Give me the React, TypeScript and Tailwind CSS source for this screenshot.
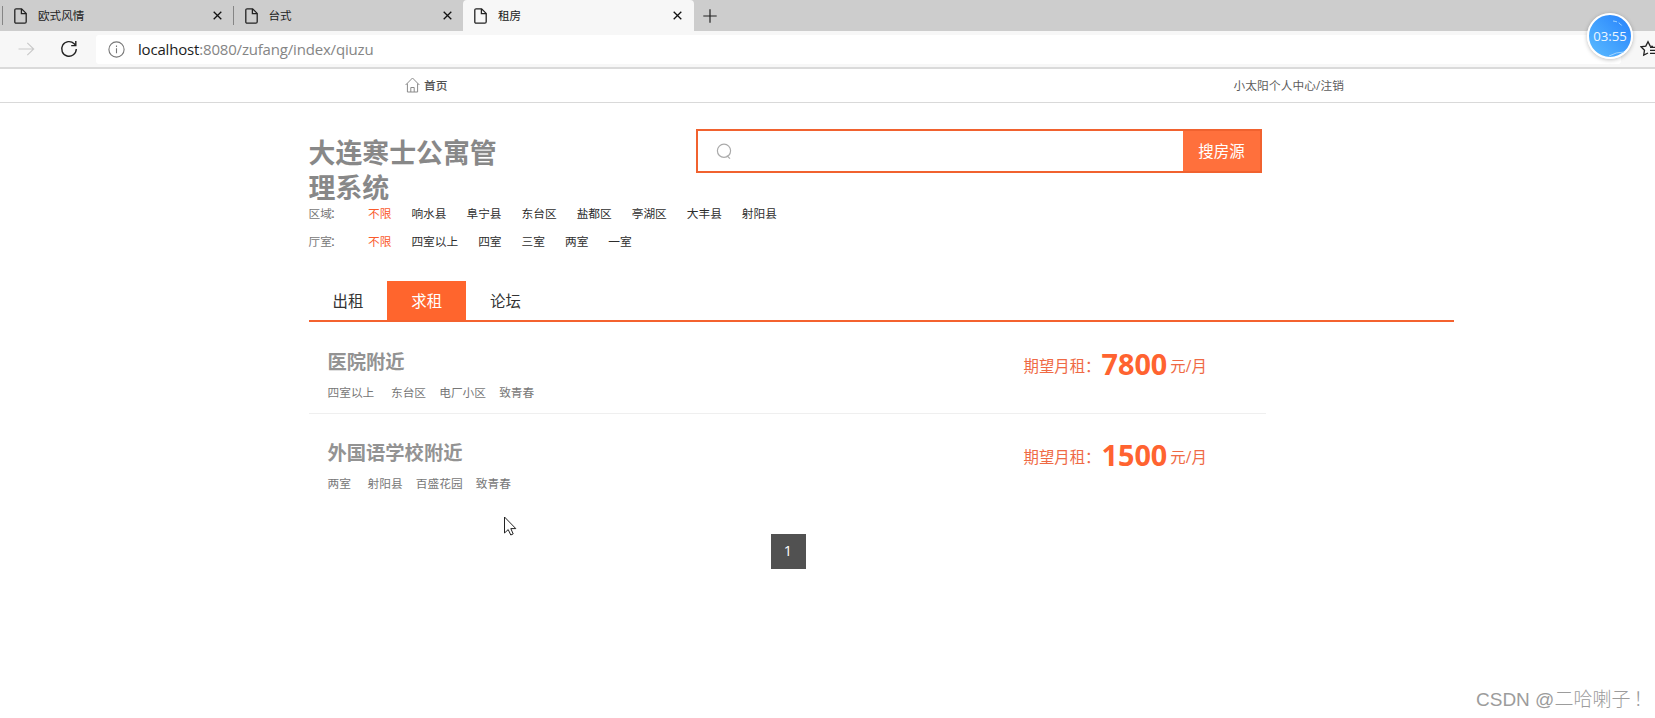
import React from 'react';
import clsx from 'clsx';

interface Tab {
    title: string;
    active?: boolean;
}

interface Listing {
    title: string;
    room: string;
    tags: string[];
    price: number;
}

const browserTabs: Tab[] = [
    { title: '欧式风情' },
    { title: '台式' },
    { title: '租房', active: true },
];

const filters = [
    { label: '区域', options: ['不限', '响水县', '阜宁县', '东台区', '盐都区', '亭湖区', '大丰县', '射阳县'] },
    { label: '厅室', options: ['不限', '四室以上', '四室', '三室', '两室', '一室'] },
];

const navItems = ['出租', '求租', '论坛'];

const listings: Listing[] = [
    { title: '医院附近', room: '四室以上', tags: ['东台区', '电厂小区', '致青春'], price: 7800 },
    { title: '外国语学校附近', room: '两室', tags: ['射阳县', '百盛花园', '致青春'], price: 1500 },
];

const FileIcon = () => (
    <svg width="13" height="16" viewBox="0 0 13 16" fill="none" stroke="#222" strokeWidth="1.3" className="shrink-0">
        <path d="M2.2 0.8H7.6L12.2 5.4V13.7Q12.2 15.2 10.8 15.2H2.2Q0.8 15.2 0.8 13.7V2.3Q0.8 0.8 2.2 0.8Z" />
        <path d="M7.4 0.9V5.6H12.1" />
    </svg>
);

const CloseIcon = () => (
    <svg width="9" height="9" viewBox="0 0 9 9" stroke="#111" strokeWidth="1.3" className="shrink-0">
        <path d="M0.7 0.7L8.3 8.3M8.3 0.7L0.7 8.3" />
    </svg>
);

const TabStrip = () => (
    <div className="flex h-[31px] bg-[#cdcdcd] pl-[2px]">
        {browserTabs.map((tab) => (
            <div
                key={tab.title}
                className={clsx(
                    'flex items-center h-[31px] pl-[11px]',
                    tab.active
                        ? 'w-[231px] bg-[#f7f7f7] rounded-t-[4px] pr-[12px]'
                        : 'w-[230.5px] pr-[11px]'
                )}
            >
                {!tab.active && <span className="w-px h-[19px] bg-[#858585] -ml-[11px] mr-[11px] shrink-0" />}
                <FileIcon />
                <span className="ml-[11px] flex-1 text-[11.6px] leading-[16px] text-[#222]">{tab.title}</span>
                <CloseIcon />
            </div>
        ))}
        <div className="flex items-center pl-[9px]">
            <svg width="14" height="14" viewBox="0 0 14 14" stroke="#222" strokeWidth="1.2">
                <path d="M7 0.3V13.7M0.3 7H13.7" />
            </svg>
        </div>
    </div>
);

const AddressBar = () => (
    <div className="flex items-center h-[38px] bg-[#f7f7f7] border-b-2 border-[#dadada] pl-[18px]">
        <svg width="17" height="14" viewBox="0 0 17 14" fill="none" stroke="#c9c9c9" strokeWidth="1.1" className="shrink-0">
            <path d="M0.5 7H15.7M9.3 0.8L15.7 7L9.3 13.2" />
        </svg>
        <svg width="18" height="18" viewBox="0 0 18 18" fill="none" stroke="#222" strokeWidth="1.4" className="ml-[25px] shrink-0">
            <path d="M16.3 9A7.3 7.3 0 1 1 14.2 3.8L15.6 5.4" />
            <path d="M15.8 1V5.6H11.2" />
        </svg>
        <div className="flex items-center w-[1525px] h-[29px] ml-[18px] bg-white rounded-[3px] shrink-0 pl-[12px]">
            <svg width="17" height="17" viewBox="0 0 17 17" fill="none" stroke="#777" strokeWidth="1.1" className="shrink-0">
                <circle cx="8.5" cy="8.5" r="7.6" />
                <path d="M8.5 7.3V12.3M8.5 4.6V6" />
            </svg>
            <span className="ml-[13px] text-[15px] leading-[20px] tracking-[-0.18px] text-[#858585]">
                <span className="text-[#1c1c1c]">localhost</span>:8080/zufang/index/qiuzu
            </span>
        </div>
        <svg width="16" height="18" viewBox="0 0 16 18" fill="none" stroke="#222" strokeWidth="1.3" className="ml-[19px] shrink-0">
            <path d="M13 6.3L10.2 6.1L8 1.7L5.8 6.1L1 6.8L4.5 10.2L3.7 15.2L8 13" />
            <path d="M10 7.4H16M10 10.4H16M10 13.4H16" />
        </svg>
    </div>
);

const TopBar = () => (
    <div className="flex items-center h-[34px] border-b border-[#d9d9d9] pl-[405px] pr-[311px] pb-px text-[11.7px] leading-[16px]">
        <svg width="15" height="16" viewBox="0 0 15 16" fill="none" stroke="#8a8a8a" strokeWidth="1">
            <path d="M0.6 8L7.5 1L14.4 8M2.4 6.5V15H12.6V6.5" />
            <path d="M5.8 15V10.5H9.2V15" />
        </svg>
        <a className="ml-[4px] font-medium text-[#505050]">首页</a>
        <a className="ml-auto tracking-[0.1px] text-[#5c5c5c]">小太阳个人中心/注销</a>
    </div>
);

const Search = () => (
    <div className="flex w-[566px] h-[44px] border-2 border-[#f1622f] mr-[4px]">
        <div className="flex flex-1 items-center pl-[18px]">
            <svg width="16" height="17" viewBox="0 0 16 17" fill="none" stroke="#aaa" strokeWidth="1.2">
                <circle cx="8" cy="7.8" r="6.6" />
                <path d="M10.8 12.6L14 15.6" />
            </svg>
        </div>
        <button className="w-[77px] bg-[#ff703c] text-[15.5px] leading-[20px] text-white">搜房源</button>
    </div>
);

const Filters = () => (
    <div className="flex flex-col text-[11.7px] leading-[29px]">
        {filters.map((filter) => (
            <div key={filter.label} className="flex h-[28.7px] whitespace-nowrap">
                <span className="w-[59.5px] text-[#777]">
                    {filter.label}
                    <span className="ml-[-2px]">：</span>
                </span>
                <div className="flex gap-[20px]">
                    {filter.options.map((option, i) => (
                        <a key={option} className={i === 0 ? 'text-[#fa5b2d]' : 'text-[#2d2d2d]'}>{option}</a>
                    ))}
                </div>
            </div>
        ))}
    </div>
);

const ListingRow = ({ item }: { item: Listing }) => (
    <li className="flex h-[91.5px] pl-[19px] border-b border-[#efefef] last:border-0">
        <div className="w-[696px] pt-[26px]">
            <h3 className="text-[19.3px] leading-[26px] font-bold text-[#939393]">{item.title}</h3>
            <p className="flex gap-[13.2px] mt-[9px] text-[11.7px] leading-[16px] text-[#777]">
                <span className="mr-[3.5px]">{item.room}</span>
                {item.tags.map((tag) => <span key={tag}>{tag}</span>)}
            </p>
        </div>
        <div className="flex items-start pt-[21px] h-[64px] text-[15.4px] leading-[46px] text-[#ef6a45] whitespace-nowrap">
            <span>期望月租：</span>
            <strong className="ml-px text-[28.8px] leading-[40px] text-[#ff6330] font-bold">{item.price}</strong>
            <span className="ml-[3px]">元/月</span>
        </div>
    </li>
);

const App: React.FC = () => {
    return (
        <div className="relative w-[1655px] h-[718px] overflow-hidden bg-white font-['Open_Sans','Noto_Sans_CJK_SC',sans-serif]">
            <TabStrip />
            <AddressBar />
            <TopBar />

            <main className="pl-[308.5px] pt-[26px]">
                <div className="flex justify-between w-[957.5px] h-[69.5px]">
                    <h1 className="w-[200px] pt-[5.5px] text-[26.9px] leading-[35.5px] font-bold text-[#888]">大连寒士公寓管理系统</h1>
                    <Search />
                </div>
                <Filters />

                <nav className="flex w-[1145px] h-[41px] mt-[25.1px] border-b-2 border-[#f4622f]">
                    {navItems.map((item) => (
                        <a
                            key={item}
                            className={clsx(
                                'w-[78.8px] text-center text-[15.4px] leading-[41px]',
                                item === '求租' ? 'bg-[#ff652d] text-white' : 'text-[#333]'
                            )}
                        >
                            {item}
                        </a>
                    ))}
                </nav>

                <ul className="w-[957.5px] pt-px">
                    {listings.map((item) => <ListingRow key={item.title} item={item} />)}
                </ul>

                <div className="flex justify-center w-[959px] mt-[28px]">
                    <span className="w-[35px] h-[35px] bg-[#515151] text-center text-[14.5px] leading-[34px] text-white">1</span>
                </div>
            </main>

            {/* Recording timer */}
            <div className="absolute left-[1587px] top-[13px] flex items-center justify-center w-[46px] h-[46px] rounded-full border-2 border-white bg-linear-to-tr from-[#5cbcff] to-[#2680fb] shadow-[0_1px_4px_rgba(0,0,0,0.25)]">
                <svg width="42" height="42" viewBox="0 0 42 42" fill="none" stroke="#a5d6ff" strokeWidth="1" className="absolute inset-0">
                    <path d="M24 6Q30 6.5 33 11" strokeDasharray="4 2" />
                    <path d="M20 41Q27 37 35 37" />
                </svg>
                <span className="relative text-[13.2px] leading-[18px] text-[#eef7ff]">03:55</span>
            </div>

            {/* Mouse pointer */}
            <svg width="13" height="20" viewBox="0 0 13 20" fill="#fff" stroke="#222" strokeWidth="1" className="absolute left-[504px] top-[516px]">
                <path d="M0.5 1V17L4.2 13.6L6.8 19L9.2 17.9L6.8 12.6H11.8Z" />
            </svg>

            <div className="absolute left-[1476px] bottom-[6px] text-[19px] leading-[24px] text-[#9c9c9c] font-light whitespace-nowrap font-['Liberation_Sans','Noto_Sans_CJK_SC',sans-serif]">
                CSDN @二哈喇子<span className="ml-[3px]">！</span>
            </div>
        </div>
    );
};

export default App;
